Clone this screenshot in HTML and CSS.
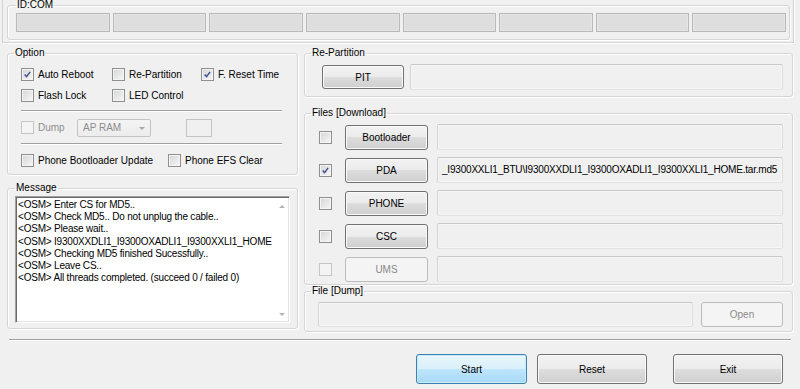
FILE: index.html
```html
<!DOCTYPE html>
<html lang="en">
<head>
  <meta charset="UTF-8">
  <meta name="viewport" content="width=device-width, initial-scale=1.0">
  <title>Odin3</title>
  <link rel="stylesheet" href="styles.css">
</head>
<body>
  <div class="com-panel">
    <fieldset class="group com-group">
      <legend>ID:COM</legend>
      <div class="com-slots">
        <div class="slot"></div>
        <div class="slot"></div>
        <div class="slot"></div>
        <div class="slot"></div>
        <div class="slot"></div>
        <div class="slot"></div>
        <div class="slot"></div>
        <div class="slot"></div>
      </div>
    </fieldset>
  </div>

  <div class="main">
    <div class="column">
      <fieldset class="group option-group">
        <legend>Option</legend>
        <div class="opt-grid">
          <label class="check"><span class="cb on"><svg viewBox="0 0 13 13"><path d="M3.2 6.4 L5.4 9 L9.6 3.4"/></svg></span>Auto Reboot</label>
          <label class="check"><span class="cb"></span>Re-Partition</label>
          <label class="check"><span class="cb on"><svg viewBox="0 0 13 13"><path d="M3.2 6.4 L5.4 9 L9.6 3.4"/></svg></span>F. Reset Time</label>
          <label class="check"><span class="cb"></span>Flash Lock</label>
          <label class="check"><span class="cb"></span>LED Control</label>
        </div>
        <div class="sep"></div>
        <div class="dump-row">
          <label class="check disabled"><span class="cb"></span>Dump</label>
          <div class="select">AP RAM<span class="arrow"></span></div>
          <div class="small-box"></div>
        </div>
        <div class="sep"></div>
        <div class="phone-row">
          <label class="check"><span class="cb"></span>Phone Bootloader Update</label>
          <label class="check"><span class="cb"></span>Phone EFS Clear</label>
        </div>
      </fieldset>

      <fieldset class="group message-group">
        <legend>Message</legend>
        <div class="log">
          <div class="log-text">
            <div>&lt;OSM&gt; Enter CS for MD5..</div>
            <div>&lt;OSM&gt; Check MD5.. Do not unplug the cable..</div>
            <div>&lt;OSM&gt; Please wait..</div>
            <div>&lt;OSM&gt; I9300XXDLI1_I9300OXADLI1_I9300XXLI1_HOME</div>
            <div>&lt;OSM&gt; Checking MD5 finished Sucessfully..</div>
            <div>&lt;OSM&gt; Leave CS..</div>
            <div>&lt;OSM&gt; All threads completed. (succeed 0 / failed 0)</div>
          </div>
          <div class="log-scroll">
            <span class="tri up"></span>
            <span class="tri down"></span>
          </div>
        </div>
      </fieldset>
    </div>

    <div class="column">
      <fieldset class="group repart-group">
        <legend>Re-Partition</legend>
        <div class="pit-row">
          <button class="btn">PIT</button>
          <div class="field"></div>
        </div>
      </fieldset>

      <fieldset class="group files-group">
        <legend>Files [Download]</legend>
        <div class="file-row">
          <span class="cb"></span>
          <button class="btn">Bootloader</button>
          <div class="field"></div>
        </div>
        <div class="file-row">
          <span class="cb on"><svg viewBox="0 0 13 13"><path d="M3.2 6.4 L5.4 9 L9.6 3.4"/></svg></span>
          <button class="btn">PDA</button>
          <div class="field">_I9300XXLI1_BTU\I9300XXDLI1_I9300OXADLI1_I9300XXLI1_HOME.tar.md5</div>
        </div>
        <div class="file-row">
          <span class="cb"></span>
          <button class="btn">PHONE</button>
          <div class="field"></div>
        </div>
        <div class="file-row">
          <span class="cb"></span>
          <button class="btn">CSC</button>
          <div class="field"></div>
        </div>
        <div class="file-row">
          <span class="cb off"></span>
          <button class="btn" disabled>UMS</button>
          <div class="field"></div>
        </div>
      </fieldset>

      <fieldset class="group dump-group">
        <legend>File [Dump]</legend>
        <div class="dump-file">
          <div class="field"></div>
          <button class="btn" disabled>Open</button>
        </div>
      </fieldset>
    </div>
  </div>

  <div class="hr"></div>

  <div class="actions">
    <button class="btn big default">Start</button>
    <button class="btn big">Reset</button>
    <button class="btn big exit">Exit</button>
  </div>
</body>
</html>
```

FILE: styles.css
```css
* {
  box-sizing: border-box;
}

html, body {
  margin: 0;
  padding: 0;
}

body {
  width: 800px;
  height: 389px;
  overflow: hidden;
  background-color: #f0f0f0;
  font-family: "Liberation Sans", Arial, sans-serif;
  font-size: 10px;
  color: #000;
}

/* group boxes */

.group {
  margin: 0;
  min-width: 0;
  padding: 0 6px;
  border: 1px solid #d5d5d5;
  border-radius: 3px;
  box-shadow: inset 1px 1px 0 #fff, 1px 1px 0 #fff;
}

.group legend {
  padding: 0 1px;
  line-height: 12px;
  color: #000;
}

/* ID:COM */

.com-panel {
  margin: 0 6px 0 2px;
  padding: 0 3px 2px 4px;
  border: 1px solid #d3d3d3;
  border-top: none;
  box-shadow: 1px 1px 0 #fff;
}

.com-group {
  margin-top: -1px;
  padding: 2px 3px 7px 8px;
}

.com-slots {
  display: grid;
  grid-template-columns: repeat(8, 1fr);
  gap: 3px;
}

.slot {
  height: 19px;
  background-color: #dedede;
  border: 1px solid #b9b9b9;
  box-shadow: inset 0 0 0 1px #e4e4e4;
}

/* main columns */

.main {
  display: grid;
  grid-template-columns: 291px 1fr;
  gap: 6px;
  margin: 4px 7px 0 7px;
}

.column {
  display: flex;
  flex-direction: column;
}

/* checkboxes */

.check {
  display: flex;
  align-items: center;
  gap: 4px;
  white-space: nowrap;
}

.check.disabled {
  color: #8d8d8d;
}

.cb {
  display: inline-block;
  flex: none;
  width: 13px;
  height: 13px;
  border: 1px solid #8e8f8f;
  background: linear-gradient(135deg, #d3d5d8, #f7f7f7);
  box-shadow: inset 0 0 0 1px #f4f4f4;
}

.cb svg {
  display: block;
  width: 11px;
  height: 11px;
  margin: 0;
}

.cb svg path {
  fill: none;
  stroke: #3c4f8c;
  stroke-width: 1.7;
}

.cb.off,
.check.disabled .cb {
  border-color: #c6c6c6;
  background: #f4f4f4;
  box-shadow: none;
}

/* option group */

.option-group {
  padding-top: 5px;
  padding-bottom: 3px;
}

.opt-grid {
  display: grid;
  grid-template-columns: 91px 89px auto;
  grid-auto-rows: 21px;
  align-items: center;
  margin-left: 7px;
}

.sep {
  height: 2px;
  margin: 4px 9px 0 7px;
  border-top: 1px solid #a0a0a0;
  border-bottom: 1px solid #fff;
}

.sep + .phone-row {
  margin-top: 5px;
}

.dump-row {
  display: flex;
  align-items: center;
  height: 19px;
  margin: 6px 0 6px 7px;
}

.dump-row .check {
  width: 56px;
}

.select {
  position: relative;
  width: 74px;
  height: 18px;
  padding-left: 5px;
  line-height: 16px;
  color: #8d8d8d;
  border: 1px solid #c4c4c4;
  border-radius: 2px;
  background: linear-gradient(#f4f4f4, #ececec);
}

.select .arrow {
  position: absolute;
  right: 5px;
  top: 7px;
  border-left: 3px solid transparent;
  border-right: 3px solid transparent;
  border-top: 3px solid #a8a8a8;
}

.small-box {
  width: 26px;
  height: 18px;
  margin-left: 35px;
  border: 1px solid #c4c4c4;
  background-color: #f0f0f0;
}

.phone-row {
  display: grid;
  grid-template-columns: 147px auto;
  align-items: center;
  height: 21px;
  margin-left: 7px;
}

/* message group */

.message-group {
  margin-top: 7px;
  padding: 2px 7px 5px 7px;
}

.log {
  display: flex;
  height: 127px;
  background-color: #fff;
  border: 1px solid;
  border-color: #a0a0a0 #fff #fff #a0a0a0;
  box-shadow: inset 1px 1px 0 #696969, inset -1px -1px 0 #e3e3e3;
}

.log-text {
  flex: 1;
  padding: 2px 0 0 2px;
  line-height: 12.2px;
  letter-spacing: -0.2px;
  white-space: nowrap;
  overflow: hidden;
}

.log-scroll {
  display: flex;
  flex-direction: column;
  justify-content: space-between;
  align-items: center;
  width: 15px;
  padding: 8px 0 6px;
}

.tri {
  border-left: 3px solid transparent;
  border-right: 3px solid transparent;
}

.tri.up {
  border-bottom: 3px solid #b4b4b4;
}

.tri.down {
  border-top: 3px solid #b4b4b4;
}

/* buttons */

.btn {
  padding: 0;
  font-family: inherit;
  font-size: 10px;
  color: #000;
  border: 1px solid #707070;
  border-radius: 3px;
  background: linear-gradient(#f2f2f2 0%, #ebebeb 50%, #dddddd 50%, #cfcfcf 100%);
  box-shadow: inset 0 0 0 1px #fbfbfb;
}

.btn:disabled {
  color: #8a8a8a;
  border-color: #b9bdc0;
  background: #f4f4f4;
  box-shadow: none;
}

.btn.default {
  border-color: #3c7fb1;
  background: linear-gradient(#eaf6fd 0%, #d9f0fc 50%, #bee6fd 50%, #a7d9f5 100%);
  box-shadow: inset 0 0 0 1px #c8ebfb;
}

/* fields */

.field {
  flex: 1;
  height: 26px;
  padding-left: 4px;
  line-height: 24px;
  letter-spacing: -0.2px;
  white-space: nowrap;
  overflow: hidden;
  background-color: #f0f0f0;
  border: 1px solid;
  border-color: #c8c8c8 #dcdcdc #e2e2e2 #d4d4d4;
  border-radius: 2px;
  box-shadow: inset 0 0 0 1px #f6f6f6;
}

/* re-partition */

.repart-group {
  padding-top: 5px;
  padding-bottom: 6px;
}

.pit-row {
  display: flex;
  align-items: center;
  gap: 6px;
  margin: 0 3px 0 11px;
}

.pit-row .btn {
  width: 82px;
  height: 24px;
}

/* files */

.files-group {
  margin-top: 10px;
  padding-top: 5px;
  padding-bottom: 2px;
}

.file-row {
  display: flex;
  align-items: center;
  margin: 0 3px 7px 8px;
}

.file-row:last-child {
  margin-bottom: 0;
}

.file-row .btn {
  width: 83px;
  height: 25px;
  margin-left: 13px;
}

.file-row .field {
  margin-left: 9px;
}

/* dump file */

.dump-group {
  padding-top: 5px;
  padding-bottom: 4px;
}

.dump-file {
  display: flex;
  gap: 8px;
  margin: 0 3px 0 7px;
}

.dump-file .field {
  height: 25px;
}

.dump-file .btn {
  width: 82px;
  height: 25px;
}

/* bottom */

.hr {
  height: 2px;
  margin: 7px 9px 0 9px;
  border-top: 1px solid #a0a0a0;
  border-bottom: 1px solid #fff;
}

.actions {
  display: flex;
  justify-content: flex-end;
  gap: 10px;
  margin-top: 13px;
  padding-right: 17px;
}

.btn.big {
  width: 110px;
  height: 30px;
}

.btn.default {
  width: 111px;
}

.btn.exit {
  margin-left: 16px;
}
```
